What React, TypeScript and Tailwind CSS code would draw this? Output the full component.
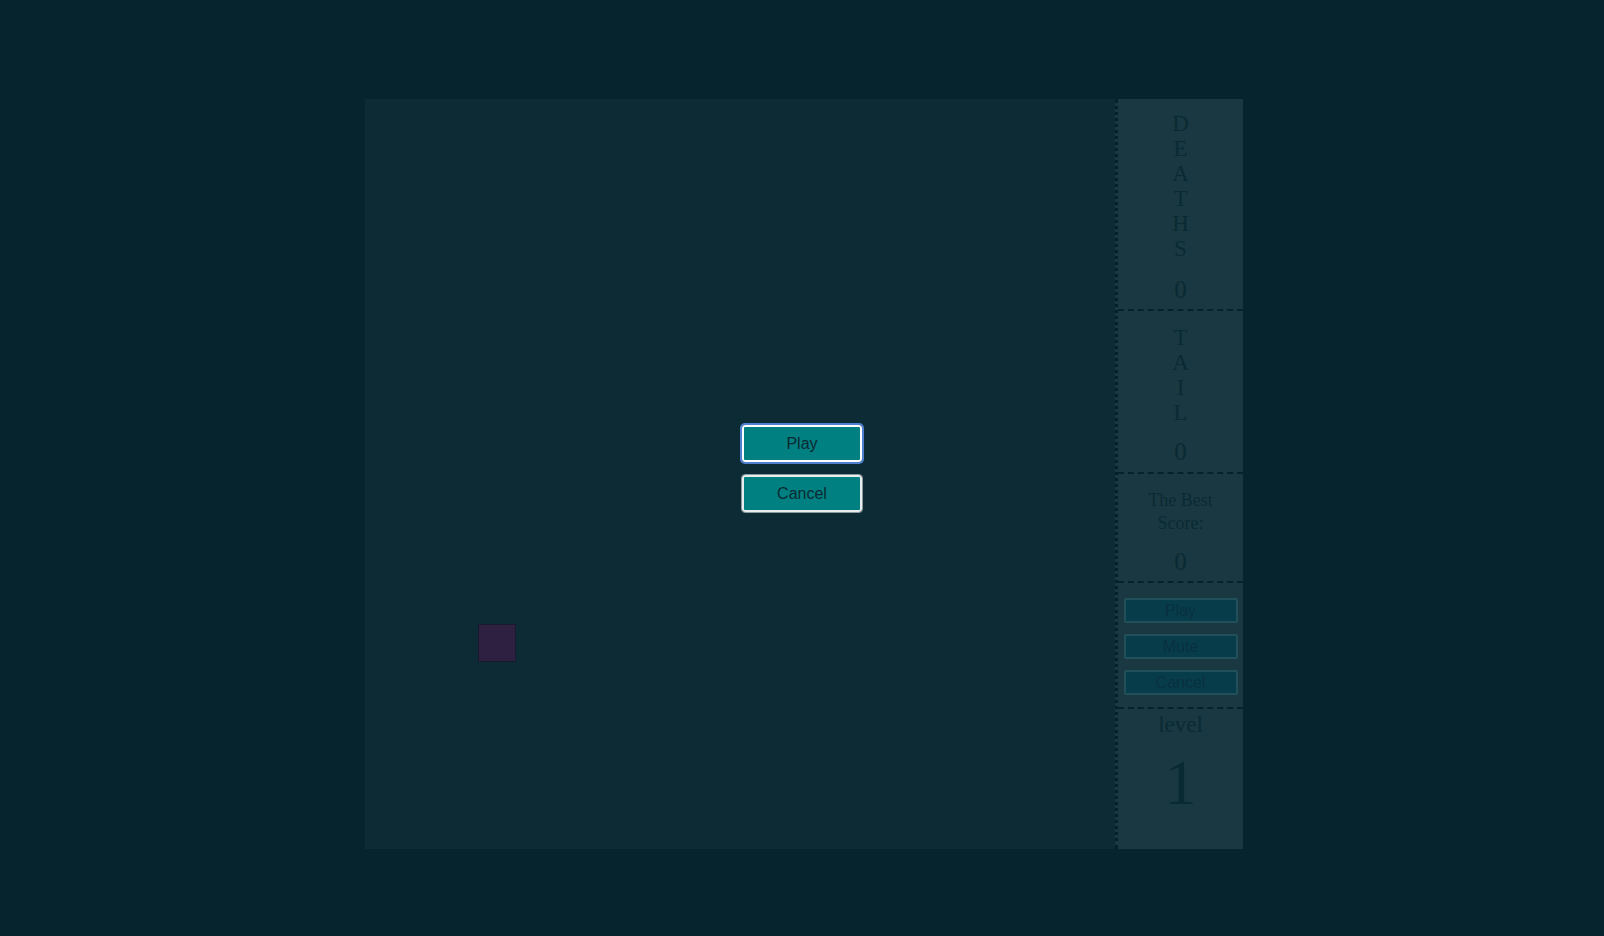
import React from "react";

const serif = { fontFamily: '"Liberation Serif", "Times New Roman", serif' };
const sans = { fontFamily: '"Liberation Sans", Arial, sans-serif' };

function Stacked({ word }: { word: string }) {
  return (
    <div className="flex flex-col items-center">
      {word.split("").map((ch, i) => (
        <span key={i} className="text-[23px] leading-[25px]">
          {ch}
        </span>
      ))}
    </div>
  );
}

function SideButton({ label }: { label: string }) {
  return (
    <button
      className="h-[25px] w-[114px] rounded-[2px] border-2 border-[#22505a] bg-[#073d4a] text-[16px] leading-none text-[#093040]"
      style={sans}
    >
      {label}
    </button>
  );
}

export default function App() {
  return (
    <div className="min-h-screen w-full bg-[#06242e] pl-[4px] pt-[99px]">
      <div className="relative mx-auto flex w-[878px]">
        {/* Board */}
        <div className="relative h-[750px] w-[750px] bg-[#0c2b34]">
          {/* snake block */}
          <div className="absolute left-[113px] top-[525px] h-[38px] w-[38px] border border-[#1a1a2e] bg-[#2e2040]" />
        </div>

        {/* Sidebar */}
        <div
          className="flex h-[750px] w-[128px] flex-col border-l-[3px] border-dotted border-[#06202a] bg-[#1a3841] text-[#0a2a33]"
          style={serif}
        >
          <div className="flex h-[212px] flex-col items-center border-b-2 border-dashed border-[#07222b] pt-[12px]">
            <Stacked word="DEATHS" />
            <span className="mt-[15px] text-[25px] leading-[28px]">0</span>
          </div>
          <div className="flex h-[163px] flex-col items-center border-b-2 border-dashed border-[#07222b] pt-[14px]">
            <Stacked word="TAIL" />
            <span className="mt-[13px] text-[25px] leading-[28px]">0</span>
          </div>
          <div className="flex h-[109px] flex-col items-center border-b-2 border-dashed border-[#07222b] pt-[15px] text-center">
            <span className="text-[18px] leading-[23px]">
              The Best
              <br />
              Score:
            </span>
            <span className="mt-[13px] text-[25px] leading-[28px]">0</span>
          </div>
          <div className="flex h-[126px] flex-col items-center gap-[11px] border-b-2 border-dashed border-[#07222b] pt-[15px]">
            <SideButton label="Play" />
            <SideButton label="Mute" />
            <SideButton label="Cancel" />
          </div>
          <div className="flex flex-1 flex-col items-center">
            <span className="mt-[2px] text-[23px] leading-[28px]">level</span>
            <span className="mt-[12px] text-[64px] leading-[64px]">1</span>
          </div>
        </div>

        {/* Start overlay */}
        <div className="absolute inset-0 flex flex-col items-center gap-[13px] pr-[4px] pt-[326px]">
          <button
            className="h-[37px] w-[120px] rounded-[3px] border-2 border-white bg-[#008080] text-[16px] text-[#0b2a33] outline outline-2 outline-offset-0 outline-[#4f7fd0]"
            style={sans}
          >
            Play
          </button>
          <button
            className="h-[37px] w-[120px] rounded-[3px] border-2 border-[#e8ecec] bg-[#008080] text-[16px] text-[#0b2a33] outline outline-1 outline-[#8a9aa0]"
            style={sans}
          >
            Cancel
          </button>
        </div>
      </div>
    </div>
  );
}
